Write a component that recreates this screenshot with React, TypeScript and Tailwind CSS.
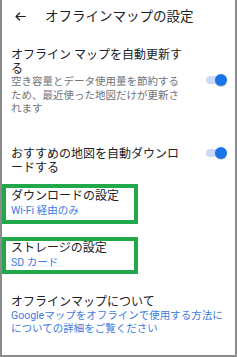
import React from 'react';

const Toggle: React.FC<{ className?: string }> = ({ className }) => (
  <div className={`relative w-[22px] h-[12px] flex items-center ${className ?? ''}`}>
    <div className="w-[20px] h-[8px] rounded-full bg-[#c9dafb] ml-[1px]" />
    <div className="absolute right-0 top-0 w-[12px] h-[12px] rounded-full bg-[#1a73e8] shadow-[0_1px_1px_rgba(0,0,0,0.2)]" />
  </div>
);

const App: React.FC = () => {
  return (
    <div
      className="w-[237px] h-[357px] bg-white border-x-2 border-b-2 border-[#8c8c8c] overflow-hidden text-[#202124]"
      style={{ fontFamily: 'Roboto, "Noto Sans CJK JP", sans-serif' }}
    >
      {/* header */}
      <div className="flex items-center h-[32px] pl-[13px]">
        <svg width="11" height="9" viewBox="0 0 11 9" fill="none" stroke="#202124" strokeWidth="1.2" strokeLinecap="round" strokeLinejoin="round">
          <path d="M10.3 4.5H1M4.6 1 1 4.5 4.6 8" />
        </svg>
        <span className="ml-[19px] text-[13.5px] leading-[16px]">オフラインマップの設定</span>
      </div>

      {/* auto update */}
      <div className="flex mt-[16px] pl-[9px]">
        <div className="w-[186px]">
          <div className="text-[12px] leading-[14px]">
            オフライン マップを自動更新す<br />る
          </div>
          <div className="text-[10.5px] leading-[13.5px] text-[#6f7378] mt-[-1px]">
            空き容量とデータ使用量を節約する<br />
            ため、最近使った地図だけが更新さ<br />
            れます
          </div>
        </div>
        <Toggle className="mt-[26px] ml-[8px]" />
      </div>

      {/* auto download */}
      <div className="flex mt-[31px] pl-[9px]">
        <div className="w-[186px] text-[12px] leading-[14px]">
          おすすめの地図を自動ダウンロ<br />ードする
        </div>
        <Toggle className="ml-[8px]" />
      </div>

      {/* download settings */}
      <div className="mt-[9px] w-[136px] h-[40px] border-4 border-[#22a84a] pl-[5px] flex flex-col justify-center">
        <div className="text-[12px] leading-[15px]">ダウンロードの設定</div>
        <div className="text-[10.5px] leading-[14px] text-[#3d7be3]">Wi-Fi 経由のみ</div>
      </div>

      {/* storage settings */}
      <div className="mt-[13px] w-[136px] h-[37px] border-4 border-[#22a84a] pl-[5px] flex flex-col justify-center">
        <div className="text-[12px] leading-[15px]">ストレージの設定</div>
        <div className="text-[10.5px] leading-[14px] text-[#3d7be3]">SD カード</div>
      </div>

      {/* about */}
      <div className="mt-[21px] pl-[9px]">
        <div className="text-[12px] leading-[14px]">オフラインマップについて</div>
        <div className="text-[10.5px] leading-[13.5px] text-[#3d7be3] whitespace-nowrap">
          Googleマップをオフラインで使用する方法に<br />
          についての詳細をご覧ください
        </div>
      </div>
    </div>
  );
};

export default App;
